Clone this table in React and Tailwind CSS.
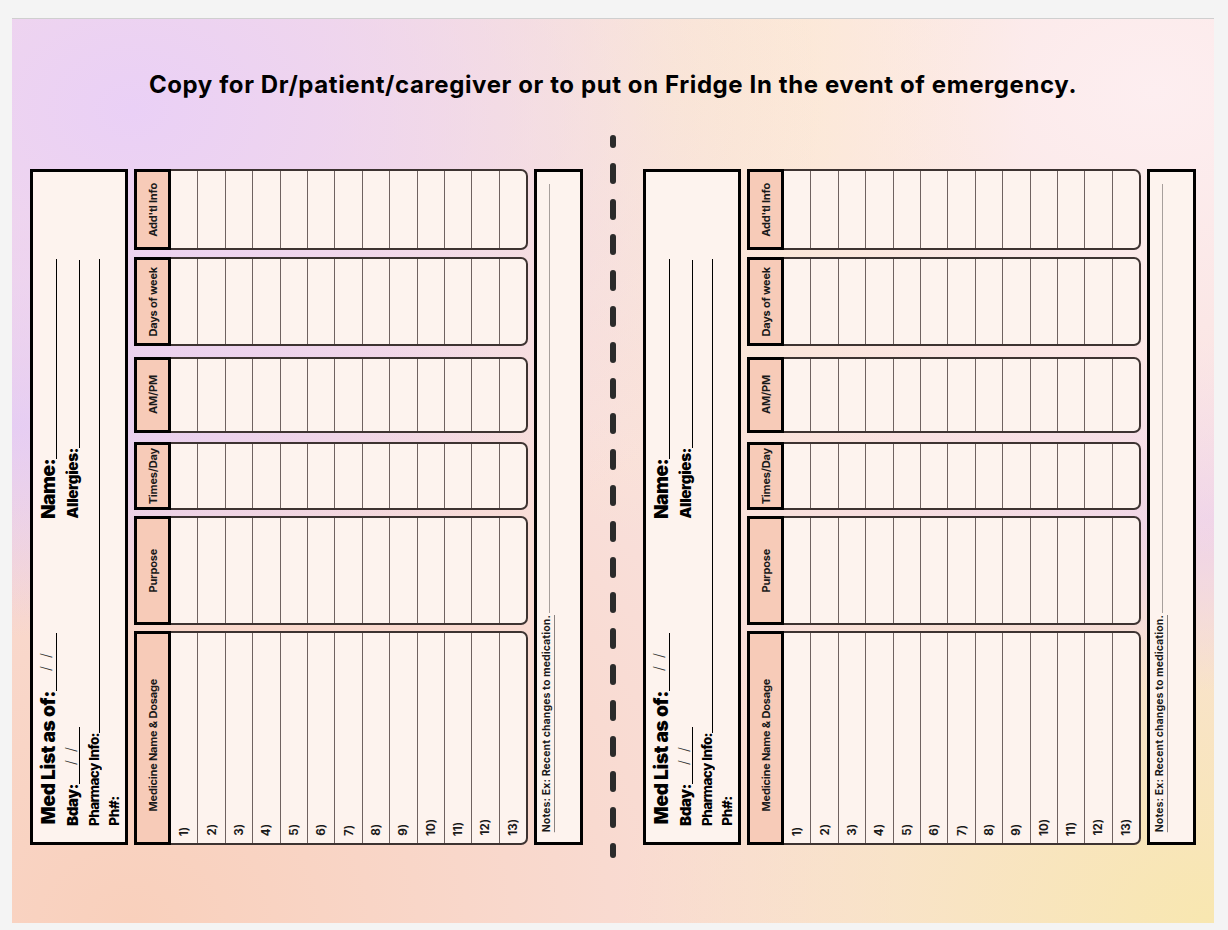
import React from "react";

const V = "[writing-mode:vertical-rl] rotate-180 whitespace-nowrap";

const groups = [
  { label: "Add'tl Info", cls: "h-[81px]" },
  { label: "Days of week", cls: "h-[89px] mt-[7px]" },
  { label: "AM/PM", cls: "h-[76px] mt-[11px]" },
  { label: "Times/Day", cls: "h-[68px] mt-[9px]" },
  { label: "Purpose", cls: "h-[109px] mt-[6px]" },
  { label: "Medicine Name & Dosage", cls: "flex-1 mt-[6px]", med: true },
];

const rows = Array.from({ length: 13 }, (_, i) => i + 1);

function Slashes({ cls }) {
  return (
    <div className={"flex flex-col items-center justify-center gap-[8px] " + cls}>
      <span className={V + " text-[14px] leading-[12px] font-light text-[#333] -translate-x-[2px]"}>/</span>
      <span className={V + " text-[14px] leading-[12px] font-light text-[#333] -translate-x-[2px]"}>/</span>
    </div>
  );
}

function InfoBox() {
  return (
    <div className="flex h-full w-[98px] border-[3px] border-black bg-[#fdf3ee]">
      {/* column 1 */}
      <div className="ml-[7px] flex h-full w-[17px] flex-col">
        <div className="flex h-[347px] flex-col pt-[87px]">
          <div className="flex-1 border-r border-black" />
          <span className={V + " text-[19px] leading-[17px] font-black tracking-[-0.5px] text-black"}>Name:</span>
        </div>
        <div className="flex flex-1 flex-col justify-end pb-[18px]">
          <Slashes cls="h-[58px] border-r border-black" />
          <span className={V + " text-[19px] leading-[17px] font-black tracking-[-0.3px] text-black"}>Med List as of:</span>
        </div>
      </div>
      {/* column 2 */}
      <div className="ml-[9px] flex h-full w-[14px] flex-col">
        <div className="flex h-[347px] flex-col pt-[88px]">
          <div className="flex-1 border-r border-black" />
          <span className={V + " text-[15px] leading-[14px] font-black tracking-[-0.3px] text-black"}>Allergies:</span>
        </div>
        <div className="flex flex-1 flex-col justify-end pb-[16px]">
          <Slashes cls="h-[57px] border-r border-black" />
          <span className={V + " text-[15px] leading-[14px] font-black tracking-[-0.3px] text-black"}>Bday:</span>
        </div>
      </div>
      {/* column 3 */}
      <div className="ml-[8px] flex h-full w-[12px] flex-col pt-[87px] pb-[16px]">
        <div className="flex-1 border-r border-black" />
        <span className={V + " text-[13.5px] leading-[12px] font-extrabold tracking-[-0.6px] text-black"}>Pharmacy Info:</span>
      </div>
      {/* column 4 */}
      <div className="ml-[8px] flex h-full w-[12px] flex-col justify-end pb-[16px]">
        <span className={V + " text-[13.5px] leading-[12px] font-extrabold tracking-[-0.3px] text-black"}>Ph#:</span>
      </div>
    </div>
  );
}

function Table() {
  return (
    <div className="ml-[6px] flex h-full w-[394px] flex-col">
      {groups.map((g) => (
        <div key={g.label} className={"flex " + g.cls}>
          <div
            className={
              "flex w-[37px] shrink-0 flex-col items-center border-[3px] border-black bg-[#f7cbb8] " +
              (g.med ? "justify-end pb-[31px]" : "justify-center")
            }
          >
            <span className={V + " text-[11px] leading-[12px] font-bold tracking-[-0.2px] text-[#1a1a1a]"}>{g.label}</span>
          </div>
          <div className="flex flex-1 rounded-r-[7px] border-y-2 border-r-2 border-[#3d3331] bg-[#fdf3ee]">
            {rows.map((r) => (
              <div
                key={r}
                className="flex flex-1 flex-col items-center justify-end border-r border-[#6f6260] pb-[7px] last:border-r-0"
              >
                {g.med && (
                  <span className={V + " text-[11.5px] leading-[12px] font-bold text-[#1a1a1a]"}>{r})</span>
                )}
              </div>
            ))}
          </div>
        </div>
      ))}
    </div>
  );
}

function Notes() {
  return (
    <div className="ml-[6px] flex h-full w-[49px] flex-col border-[3px] border-black bg-[#fdf3ee] pt-[12px] pb-[10px]">
      <div className="ml-[12px] w-px flex-1 bg-[#a79f9c]" />
      <span
        className={
          V +
          " ml-[4px] mt-[2px] text-[10.5px] leading-[12px] font-bold tracking-[0.1px] text-[#1a1a1a] underline decoration-[#8a8280] underline-offset-[2px]"
        }
      >
        Notes: Ex: Recent changes to medication.
      </span>
    </div>
  );
}

function Form() {
  return (
    <div className="mt-[35px] flex h-[676px] w-[553px] shrink-0">
      <InfoBox />
      <Table />
      <Notes />
    </div>
  );
}

function Dashes() {
  return (
    <div className="mt-[1px] flex w-[60px] shrink-0 flex-col items-center gap-[14.8px]">
      <div className="h-[13px] w-[6px] rounded-full bg-[#2b2b2b]" />
      {Array.from({ length: 19 }, (_, i) => (
        <div key={i} className="h-[21px] w-[6px] rounded-full bg-[#2b2b2b]" />
      ))}
      <div className="h-[15px] w-[6px] rounded-full bg-[#2b2b2b]" />
    </div>
  );
}

export default function App() {
  return (
    <div className="h-[930px] w-[1228px] overflow-hidden bg-[#f4f4f4] pt-[18px] [font-family:Inter,sans-serif]">
      <div className="ml-[12px] flex h-[905px] w-[1202px] flex-col border-t border-[#cfcfcf] bg-[#f9e0dc] bg-[image:radial-gradient(ellipse_at_10%_10%,#ead0f6_0%,rgba(234,208,246,0)_45%),radial-gradient(ellipse_at_0%_45%,#e4ccf1_0%,rgba(228,204,241,0)_30%),radial-gradient(ellipse_at_55%_8%,#fdead0_0%,rgba(253,234,208,0)_38%),radial-gradient(ellipse_at_95%_8%,#fdeef0_0%,rgba(253,238,240,0)_40%),radial-gradient(ellipse_at_100%_55%,#efd3e8_0%,rgba(239,211,232,0)_25%),radial-gradient(ellipse_at_100%_100%,#f8e7b0_0%,rgba(248,231,176,0)_35%),radial-gradient(ellipse_at_10%_100%,#f9d0bc_0%,rgba(249,208,188,0)_50%)]">
        <h1 className="pt-[51px] text-center text-[24px] leading-[30px] font-bold tracking-[0.6px] text-black">
          Copy for Dr/patient/caregiver or to put on Fridge In the event of emergency.
        </h1>
        <div className="mt-[34px] flex items-start pl-[18px]">
          <Form />
          <Dashes />
          <Form />
        </div>
      </div>
    </div>
  );
}
